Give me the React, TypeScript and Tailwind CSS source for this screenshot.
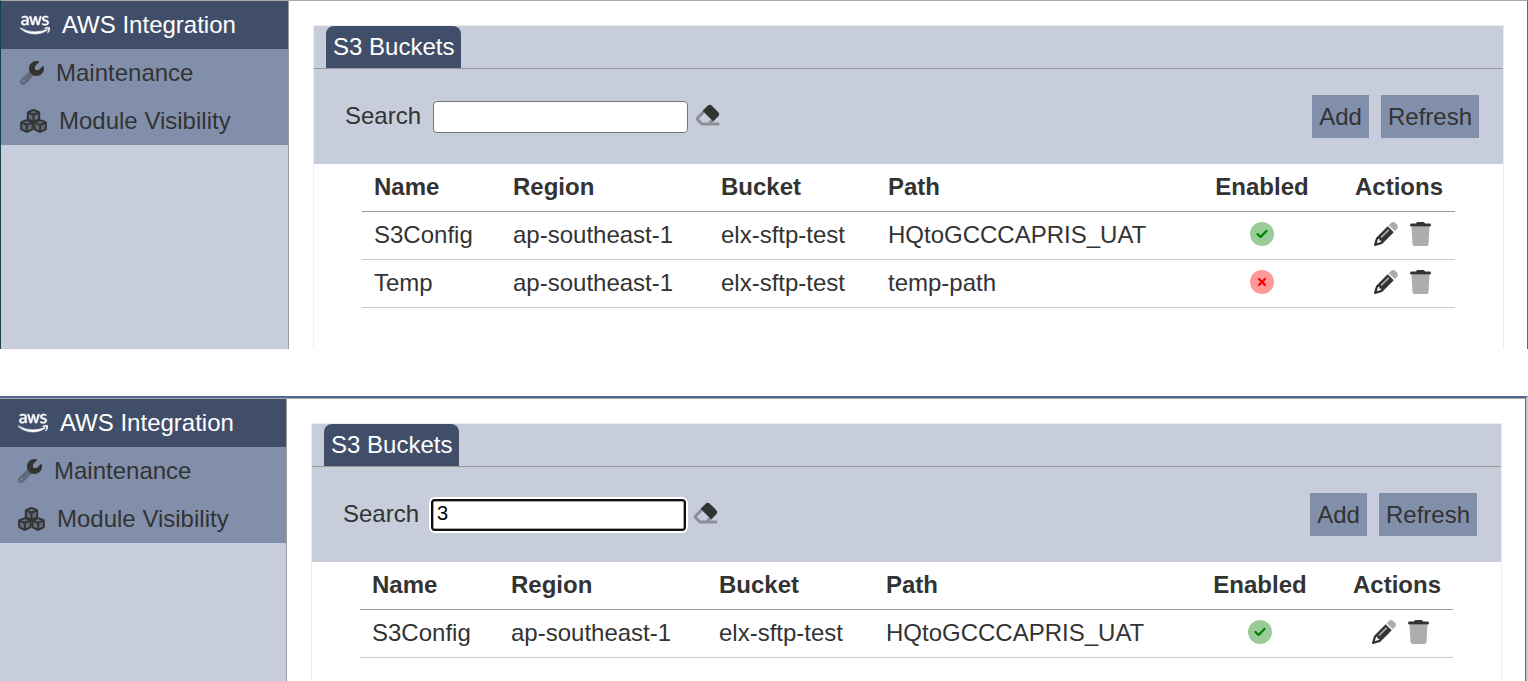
import { useId, useState } from "react";
import clsx from "clsx";
import { FaAws } from "react-icons/fa6";

interface Bucket {
  name: string;
  region: string;
  bucket: string;
  path: string;
  enabled: boolean;
}

interface BucketPanelProps {
  initialSearch?: string;
  focused?: boolean;
}

const buckets: Bucket[] = [
  {
    name: "S3Config",
    region: "ap-southeast-1",
    bucket: "elx-sftp-test",
    path: "HQtoGCCCAPRIS_UAT",
    enabled: true,
  },
  {
    name: "Temp",
    region: "ap-southeast-1",
    bucket: "elx-sftp-test",
    path: "temp-path",
    enabled: false,
  },
];

function WrenchIcon() {
  return (
    <svg viewBox="0 0 512 512" className="size-6 shrink-0" fill="currentColor" aria-hidden="true">
      <path
        opacity=".4"
        d="M201.5 214.5 19.9 396.1C7.2 408.8 0 426.1 0 444.1 0 481.6 30.4 512 67.9 512c18 0 35.3-7.2 48-19.9L297.5 310.5A160 160 0 0 1 201.5 214.5zM80 408a24 24 0 1 1 0 48 24 24 0 1 1 0-48z"
      />
      <path d="M352 320c88.4 0 160-71.6 160-160 0-15.3-2.2-30.1-6.2-44.2-3.1-10.8-16.4-13.2-24.3-5.3l-76.8 76.8c-3 3-7.1 4.7-11.3 4.7H336c-8.8 0-16-7.2-16-16v-57.4c0-4.2 1.7-8.3 4.7-11.3l76.8-76.8c7.9-7.9 5.4-21.2-5.3-24.3C382.1 2.2 367.3 0 352 0 263.6 0 192 71.6 192 160s71.6 160 160 160z" />
    </svg>
  );
}

function CubesIcon() {
  const cubes = [
    [288, 22],
    [146, 238],
    [430, 238],
  ];
  return (
    <svg
      viewBox="0 0 576 512"
      className="h-6 w-[27px] shrink-0"
      stroke="currentColor"
      strokeWidth="42"
      strokeLinejoin="round"
      aria-hidden="true"
    >
      {cubes.map(([x, y]) => (
        <g key={`${x}-${y}`} transform={`translate(${x} ${y})`}>
          <path
            fill="currentColor"
            fillOpacity=".4"
            d="M-16 3Q0-3 16 3L104 38Q122 46 122 64V180Q122 196 106 204L16 246Q0 254-16 246L-106 204Q-122 196-122 180V64Q-122 46-104 38z"
          />
          <path fill="none" d="M-112 54 0 100 112 54M0 100V248" />
        </g>
      ))}
    </svg>
  );
}

function EraserIcon() {
  return (
    <svg viewBox="0 0 576 512" className="h-6 w-[27px]" fill="currentColor" aria-hidden="true">
      <path
        opacity=".4"
        d="M227.3 211.3 182 166 57.4 290.7c-25 25-25 65.5 0 90.5l80 80c12 12 28.3 18.7 45.3 18.7H512c17.7 0 32-14.3 32-32s-14.3-32-32-32H387.9l22-22-45.2-45.2L297.4 416H182.6l-80-80z"
      />
      <path d="M290.7 57.4 182 166l182.7 182.7 45.2 45.2 108.7-108.6c25-25 25-65.5 0-90.5L381.3 57.4c-25-25-65.5-25-90.6 0z" />
    </svg>
  );
}

function PencilIcon() {
  return (
    <svg viewBox="0 0 512 512" className="size-6" fill="currentColor" aria-hidden="true">
      <path
        opacity=".4"
        d="M362.7 18.7 314.3 67.1 444.2 197l48.5-48.3c25-25 25-65.5 0-90.5L453.3 18.7c-25-25-65.5-25-90.6 0zM315.3 164.1c-6.2-6.2-16.4-6.2-22.6 0l-144 144c-6.2 6.2-6.2 16.4 0 22.6s16.4 6.2 22.6 0l144-144c6.2-6.2 6.2-16.4 0-22.6z"
      />
      <path d="M421.6 219.7 291.7 89.8 58.6 322.9c-10.4 10.4-18 23.3-22.2 37.4L1 480.7c-2.5 8.4-.2 17.5 6.1 23.7s15.3 8.5 23.7 6.1l120.3-35.4c14.1-4.2 27-11.8 37.4-22.2zM160 399.4l-9.1 22.7c-4 3.1-8.5 5.4-13.3 6.9L59.4 452l23-78.1c1.4-4.9 3.8-9.4 6.9-13.3l22.7-9.1v32c0 8.8 7.2 16 16 16h32zM315.3 186.7l-144 144c-6.2 6.2-16.4 6.2-22.6 0s-6.2-16.4 0-22.6l144-144c6.2-6.2 16.4-6.2 22.6 0s6.2 16.4 0 22.6z" />
    </svg>
  );
}

function TrashIcon() {
  return (
    <svg viewBox="0 0 448 512" className="h-6 w-[21px]" fill="currentColor" aria-hidden="true">
      <path
        opacity=".4"
        d="M32 96 53.2 467c1.6 25.3 22.6 45 47.9 45h245.8c25.3 0 46.3-19.7 47.9-45L416 96z"
      />
      <path d="M135.2 17.7 128 32H32C14.3 32 0 46.3 0 64s14.3 32 32 32h384c17.7 0 32-14.3 32-32s-14.3-32-32-32h-96l-7.2-14.3C307.4 6.8 296.3 0 284.2 0H163.8c-12.1 0-23.2 6.8-28.6 17.7z" />
    </svg>
  );
}

function StatusIcon({ enabled }: { enabled: boolean }) {
  return (
    <svg
      viewBox="0 0 512 512"
      className={clsx("size-6", enabled ? "text-[#008000]" : "text-[#ff0000]")}
      fill="currentColor"
      role="img"
      aria-label={enabled ? "Enabled" : "Disabled"}
    >
      <circle cx="256" cy="256" r="256" opacity=".4" />
      {enabled ? (
        <path d="M369 209 241 337c-9.4 9.4-24.6 9.4-33.9 0l-64-64c-9.4-9.4-9.4-24.6 0-33.9s24.6-9.4 33.9 0l47 47L335 175c9.4-9.4 24.6-9.4 33.9 0s9.4 24.6 0 33.9z" />
      ) : (
        <path d="M175 175c9.4-9.4 24.6-9.4 33.9 0l47 47 47-47c9.4-9.4 24.6-9.4 33.9 0s9.4 24.6 0 33.9l-47 47 47 47c9.4 9.4 9.4 24.6 0 33.9s-24.6 9.4-33.9 0l-47-47-47 47c-9.4 9.4-24.6 9.4-33.9 0s-9.4-24.6 0-33.9l47-47-47-47c-9.4-9.4-9.4-24.6 0-33.9z" />
      )}
    </svg>
  );
}

const navItem = "flex h-12 items-center gap-3";

function Sidebar({ className, inset }: { className: string; inset: string }) {
  return (
    <nav className={clsx("shrink-0 border-r border-[#999] bg-[#c7cddb]", className)}>
      <a href="#aws" className={clsx(navItem, inset, "bg-[#414e69] text-white")}>
        <FaAws className="h-6 w-[30px] shrink-0 stroke-white stroke-[12]" />
        AWS Integration
      </a>
      <a href="#maintenance" className={clsx(navItem, inset, "bg-[#828fab]")}>
        <WrenchIcon />
        Maintenance
      </a>
      <a href="#modules" className={clsx(navItem, inset, "bg-[#828fab]")}>
        <CubesIcon />
        Module Visibility
      </a>
    </nav>
  );
}

const th = "h-12 border-b border-[#999] px-3 pb-[2px] font-bold";
const td = "h-12 border-b border-[#ccc] px-3";
const textTd = `${td} pb-[2px]`;

function BucketTable({ rows }: { rows: Bucket[] }) {
  return (
    <table className="w-full table-fixed border-separate border-spacing-0">
      <colgroup>
        <col className="w-[139px]" />
        <col className="w-[208px]" />
        <col className="w-[167px]" />
        <col />
        <col className="w-[162px]" />
        <col className="w-[112px]" />
      </colgroup>
      <thead>
        <tr>
          <th className={clsx(th, "text-left")}>Name</th>
          <th className={clsx(th, "text-left")}>Region</th>
          <th className={clsx(th, "text-left")}>Bucket</th>
          <th className={clsx(th, "text-left")}>Path</th>
          <th className={clsx(th, "text-center")}>Enabled</th>
          <th className={clsx(th, "text-left")}>Actions</th>
        </tr>
      </thead>
      <tbody>
        {rows.map((row) => (
          <tr key={row.name}>
            <td className={textTd}>{row.name}</td>
            <td className={textTd}>{row.region}</td>
            <td className={textTd}>{row.bucket}</td>
            <td className={textTd}>{row.path}</td>
            <td className={td}>
              <div className="flex justify-center pb-[3px]">
                <StatusIcon enabled={row.enabled} />
              </div>
            </td>
            <td className={td}>
              <div className="flex justify-end gap-3 pr-3 pb-[3px]">
                <button type="button" aria-label={`Edit ${row.name}`}>
                  <PencilIcon />
                </button>
                <button type="button" aria-label={`Delete ${row.name}`}>
                  <TrashIcon />
                </button>
              </div>
            </td>
          </tr>
        ))}
      </tbody>
    </table>
  );
}

function BucketPanel({ initialSearch = "", focused = false }: BucketPanelProps) {
  const [search, setSearch] = useState(initialSearch);
  const id = useId();
  const rows = buckets.filter((b) => b.name.toLowerCase().includes(search.toLowerCase()));

  return (
    <main className="flex min-w-0 flex-1 flex-col bg-white pt-6 pr-[23px] pl-6">
      <section className="flex-1 border border-b-0 border-[#eee]">
        <div className="flex border-b border-[#999] bg-[#c7cddb] px-3">
          <button type="button" className="h-[42px] rounded-t-lg bg-[#414e69] px-[7px] text-white">
            S3 Buckets
          </button>
        </div>
        <div className="flex h-[95px] items-center justify-between bg-[#c7cddb] pr-6 pl-[31px]">
          <div className="flex items-center">
            <label htmlFor={id} className="mr-3 pb-[2px]">
              Search
            </label>
            <input
              id={id}
              type="text"
              value={search}
              onChange={(e) => setSearch(e.target.value)}
              className={clsx(
                "mr-[6px] h-8 w-[255px] rounded-[4px] bg-white pb-[2px] text-xl text-black outline-none",
                focused
                  ? "border-2 border-[#101010] px-1 ring-2 ring-white inset-shadow-[0_0_0_1px_#aaa]"
                  : "border border-[#767676] px-[5px]",
              )}
            />
            <button
              type="button"
              aria-label="Clear search"
              className="pb-1"
              onClick={() => setSearch("")}
            >
              <EraserIcon />
            </button>
          </div>
          <div className="flex gap-3">
            <button type="button" className="h-[43px] bg-[#828fab] px-[7px]">
              Add
            </button>
            <button type="button" className="h-[43px] bg-[#828fab] px-[7px]">
              Refresh
            </button>
          </div>
        </div>
        <div className="px-12 pb-[41px]">
          <BucketTable rows={rows} />
        </div>
      </section>
    </main>
  );
}

export default function App() {
  return (
    <div className="flex h-screen flex-col gap-[47px] overflow-hidden bg-white font-['Liberation_Sans',Arial,sans-serif] text-2xl leading-6 text-[#333]">
      <div className="flex shrink-0 border-t border-r border-l border-t-[#a9a9a9] border-r-[#666] border-l-[#17424a]">
        <Sidebar className="w-72" inset="pl-[19px]" />
        <BucketPanel />
      </div>
      <div className="min-h-0 flex-1 border-t-2 border-r-2 border-t-[#506690] border-r-[#c8c8c8]">
        <div className="flex h-full border-t border-r border-t-[#a9a9a9] border-r-[#666]">
          <Sidebar className="w-[287px]" inset="pl-[18px]" />
          <BucketPanel initialSearch="3" focused />
        </div>
      </div>
    </div>
  );
}
